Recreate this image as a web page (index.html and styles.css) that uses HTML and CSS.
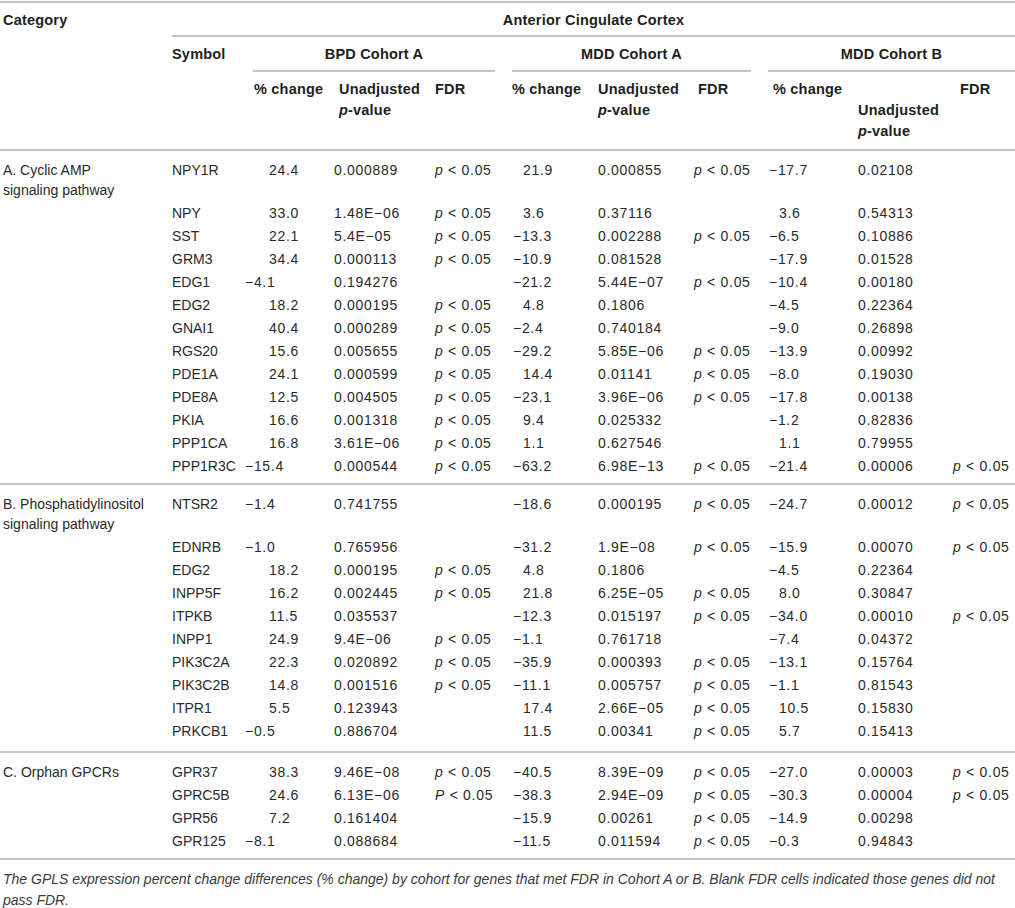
FILE: index.html
```html
<!DOCTYPE html>
<html lang="en">
<head>
  <meta charset="UTF-8">
  <meta name="viewport" content="width=device-width, initial-scale=1.0">
  <title>GPCR expression - Anterior Cingulate Cortex</title>
  <link rel="stylesheet" href="styles.css">
</head>
<body>
  <table class="gpcr">
    <colgroup>
      <col style="width:172px"><col style="width:73px">
      <col style="width:89px"><col style="width:101px"><col style="width:77px">
      <col style="width:86px"><col style="width:96px"><col style="width:75px">
      <col style="width:89px"><col style="width:95px"><col style="width:62px">
    </colgroup>
    <thead>
      <tr class="h-region">
        <th class="cat">Category</th>
        <th colspan="10" class="region">Anterior Cingulate Cortex</th>
      </tr>
      <tr class="h-cohort">
        <th></th>
        <th class="sym">Symbol</th>
        <th colspan="3"><div class="cohort bpd">BPD Cohort A</div></th>
        <th colspan="3"><div class="cohort mdd-a">MDD Cohort A</div></th>
        <th colspan="3"><div class="cohort mdd-b">MDD Cohort B</div></th>
      </tr>
      <tr class="h-metric">
        <th></th>
        <th></th>
        <th>% change</th>
        <th>Unadjusted<br><i>p</i>-value</th>
        <th>FDR</th>
        <th>% change</th>
        <th>Unadjusted<br><i>p</i>-value</th>
        <th>FDR</th>
        <th>% change</th>
        <th><br>Unadjusted<br><i>p</i>-value</th>
        <th>FDR</th>
      </tr>
    </thead>

    <tbody class="grp-a">
      <tr class="lead"><td>A. Cyclic AMP<br>signaling pathway</td><td>NPY1R</td><td class="up">24.4</td><td>0.000889</td><td><i>p</i> &lt; 0.05</td><td class="up">21.9</td><td>0.000855</td><td><i>p</i> &lt; 0.05</td><td>−17.7</td><td>0.02108</td><td></td></tr>
      <tr><td></td><td>NPY</td><td class="up">33.0</td><td>1.48E−06</td><td><i>p</i> &lt; 0.05</td><td class="up">3.6</td><td>0.37116</td><td></td><td class="up">3.6</td><td>0.54313</td><td></td></tr>
      <tr><td></td><td>SST</td><td class="up">22.1</td><td>5.4E−05</td><td><i>p</i> &lt; 0.05</td><td>−13.3</td><td>0.002288</td><td><i>p</i> &lt; 0.05</td><td>−6.5</td><td>0.10886</td><td></td></tr>
      <tr><td></td><td>GRM3</td><td class="up">34.4</td><td>0.000113</td><td><i>p</i> &lt; 0.05</td><td>−10.9</td><td>0.081528</td><td></td><td>−17.9</td><td>0.01528</td><td></td></tr>
      <tr><td></td><td>EDG1</td><td>−4.1</td><td>0.194276</td><td></td><td>−21.2</td><td>5.44E−07</td><td><i>p</i> &lt; 0.05</td><td>−10.4</td><td>0.00180</td><td></td></tr>
      <tr><td></td><td>EDG2</td><td class="up">18.2</td><td>0.000195</td><td><i>p</i> &lt; 0.05</td><td class="up">4.8</td><td>0.1806</td><td></td><td>−4.5</td><td>0.22364</td><td></td></tr>
      <tr><td></td><td>GNAI1</td><td class="up">40.4</td><td>0.000289</td><td><i>p</i> &lt; 0.05</td><td>−2.4</td><td>0.740184</td><td></td><td>−9.0</td><td>0.26898</td><td></td></tr>
      <tr><td></td><td>RGS20</td><td class="up">15.6</td><td>0.005655</td><td><i>p</i> &lt; 0.05</td><td>−29.2</td><td>5.85E−06</td><td><i>p</i> &lt; 0.05</td><td>−13.9</td><td>0.00992</td><td></td></tr>
      <tr><td></td><td>PDE1A</td><td class="up">24.1</td><td>0.000599</td><td><i>p</i> &lt; 0.05</td><td class="up">14.4</td><td>0.01141</td><td><i>p</i> &lt; 0.05</td><td>−8.0</td><td>0.19030</td><td></td></tr>
      <tr><td></td><td>PDE8A</td><td class="up">12.5</td><td>0.004505</td><td><i>p</i> &lt; 0.05</td><td>−23.1</td><td>3.96E−06</td><td><i>p</i> &lt; 0.05</td><td>−17.8</td><td>0.00138</td><td></td></tr>
      <tr><td></td><td>PKIA</td><td class="up">16.6</td><td>0.001318</td><td><i>p</i> &lt; 0.05</td><td class="up">9.4</td><td>0.025332</td><td></td><td>−1.2</td><td>0.82836</td><td></td></tr>
      <tr><td></td><td>PPP1CA</td><td class="up">16.8</td><td>3.61E−06</td><td><i>p</i> &lt; 0.05</td><td class="up">1.1</td><td>0.627546</td><td></td><td class="up">1.1</td><td>0.79955</td><td></td></tr>
      <tr class="tail"><td></td><td>PPP1R3C</td><td>−15.4</td><td>0.000544</td><td><i>p</i> &lt; 0.05</td><td>−63.2</td><td>6.98E−13</td><td><i>p</i> &lt; 0.05</td><td>−21.4</td><td>0.00006</td><td><i>p</i> &lt; 0.05</td></tr>
    </tbody>

    <tbody class="grp-b">
      <tr class="lead"><td>B. Phosphatidylinositol<br>signaling pathway</td><td>NTSR2</td><td>−1.4</td><td>0.741755</td><td></td><td>−18.6</td><td>0.000195</td><td><i>p</i> &lt; 0.05</td><td>−24.7</td><td>0.00012</td><td><i>p</i> &lt; 0.05</td></tr>
      <tr><td></td><td>EDNRB</td><td>−1.0</td><td>0.765956</td><td></td><td>−31.2</td><td>1.9E−08</td><td><i>p</i> &lt; 0.05</td><td>−15.9</td><td>0.00070</td><td><i>p</i> &lt; 0.05</td></tr>
      <tr><td></td><td>EDG2</td><td class="up">18.2</td><td>0.000195</td><td><i>p</i> &lt; 0.05</td><td class="up">4.8</td><td>0.1806</td><td></td><td>−4.5</td><td>0.22364</td><td></td></tr>
      <tr><td></td><td>INPP5F</td><td class="up">16.2</td><td>0.002445</td><td><i>p</i> &lt; 0.05</td><td class="up">21.8</td><td>6.25E−05</td><td><i>p</i> &lt; 0.05</td><td class="up">8.0</td><td>0.30847</td><td></td></tr>
      <tr><td></td><td>ITPKB</td><td class="up">11.5</td><td>0.035537</td><td></td><td>−12.3</td><td>0.015197</td><td><i>p</i> &lt; 0.05</td><td>−34.0</td><td>0.00010</td><td><i>p</i> &lt; 0.05</td></tr>
      <tr><td></td><td>INPP1</td><td class="up">24.9</td><td>9.4E−06</td><td><i>p</i> &lt; 0.05</td><td>−1.1</td><td>0.761718</td><td></td><td>−7.4</td><td>0.04372</td><td></td></tr>
      <tr><td></td><td>PIK3C2A</td><td class="up">22.3</td><td>0.020892</td><td><i>p</i> &lt; 0.05</td><td>−35.9</td><td>0.000393</td><td><i>p</i> &lt; 0.05</td><td>−13.1</td><td>0.15764</td><td></td></tr>
      <tr><td></td><td>PIK3C2B</td><td class="up">14.8</td><td>0.001516</td><td><i>p</i> &lt; 0.05</td><td>−11.1</td><td>0.005757</td><td><i>p</i> &lt; 0.05</td><td>−1.1</td><td>0.81543</td><td></td></tr>
      <tr><td></td><td>ITPR1</td><td class="up">5.5</td><td>0.123943</td><td></td><td class="up">17.4</td><td>2.66E−05</td><td><i>p</i> &lt; 0.05</td><td class="up">10.5</td><td>0.15830</td><td></td></tr>
      <tr class="tail"><td></td><td>PRKCB1</td><td>−0.5</td><td>0.886704</td><td></td><td class="up">11.5</td><td>0.00341</td><td><i>p</i> &lt; 0.05</td><td class="up">5.7</td><td>0.15413</td><td></td></tr>
    </tbody>

    <tbody class="grp-c">
      <tr class="lead"><td>C. Orphan GPCRs</td><td>GPR37</td><td class="up">38.3</td><td>9.46E−08</td><td><i>p</i> &lt; 0.05</td><td>−40.5</td><td>8.39E−09</td><td><i>p</i> &lt; 0.05</td><td>−27.0</td><td>0.00003</td><td><i>p</i> &lt; 0.05</td></tr>
      <tr><td></td><td>GPRC5B</td><td class="up">24.6</td><td>6.13E−06</td><td><i>P</i> &lt; 0.05</td><td>−38.3</td><td>2.94E−09</td><td><i>p</i> &lt; 0.05</td><td>−30.3</td><td>0.00004</td><td><i>p</i> &lt; 0.05</td></tr>
      <tr><td></td><td>GPR56</td><td class="up">7.2</td><td>0.161404</td><td></td><td>−15.9</td><td>0.00261</td><td><i>p</i> &lt; 0.05</td><td>−14.9</td><td>0.00298</td><td></td></tr>
      <tr class="tail"><td></td><td>GPR125</td><td>−8.1</td><td>0.088684</td><td></td><td>−11.5</td><td>0.011594</td><td><i>p</i> &lt; 0.05</td><td>−0.3</td><td>0.94843</td><td></td></tr>
    </tbody>
  </table>

  <p class="note">The GPLS expression percent change differences (% change) by cohort for genes that met FDR in Cohort A or B. Blank FDR cells indicated those genes did not pass FDR.</p>
</body>
</html>
```

FILE: styles.css
```css
body {
  font-family: "Liberation Sans", Arial, sans-serif;
  margin: 0;
  padding-top: 1px;
  background: #fff;
  color: #2a2a2a;
}

.gpcr {
  width: 1015px;
  table-layout: fixed;
  border-collapse: separate;
  border-spacing: 0;
  font-size: 14px;
}

.gpcr th,
.gpcr td {
  padding: 0;
  text-align: left;
  vertical-align: top;
  white-space: nowrap;
}

/* header */
.gpcr th {
  font-size: 14.5px;
  font-weight: bold;
  letter-spacing: 0.2px;
  color: #1e1e1e;
}

.h-region th {
  border-top: 2px solid #c4c4c4;
  padding: 7px 0 5px;
  line-height: 20px;
}
.h-region .cat { padding-left: 3px; }
.h-region .region {
  text-align: center;
  border-bottom: 2px solid #c4c4c4;
}

.h-cohort th {
  padding: 7px 0 8px;
  line-height: 20px;
}
.h-cohort th[colspan] { padding-bottom: 0; }

.cohort {
  text-align: center;
  padding-bottom: 6px;
  border-bottom: 2px solid #c4c4c4;
}
.cohort.bpd { margin: 0 17px 0 8px; }
.cohort.mdd-a { margin: 0 18px 0 0; }
.cohort.mdd-b { margin: 0 0 0 -1px; }

.h-metric th {
  padding: 6.5px 0 7.5px;
  line-height: 21px;
  border-bottom: 2px solid #c4c4c4;
}
.h-metric th:nth-child(3) { padding-left: 9px; }
.h-metric th:nth-child(4) { padding-left: 5px; }
.h-metric th:nth-child(8) { padding-left: 4px; }
.h-metric th:nth-child(9) { padding-left: 4px; }
.h-metric th:nth-child(11) { padding-left: 7px; }

/* body rows */
.gpcr td {
  padding-top: 1.5px;
  padding-bottom: 1.5px;
  line-height: 20px;
  letter-spacing: 0.7px;
}
.gpcr td:nth-child(1),
.gpcr td:nth-child(2) { letter-spacing: 0; }
.gpcr td:nth-child(1) { padding-left: 3px; }

.gpcr td:nth-child(3).up { padding-left: 24px; }
.gpcr td:nth-child(6) { padding-left: 1px; }
.gpcr td:nth-child(6).up { padding-left: 11px; }
.gpcr td:nth-child(9).up { padding-left: 10px; }

.gpcr tr.lead td { padding-top: 9px; }
.gpcr tr.tail td { border-bottom: 2px solid #c4c4c4; }
.grp-a tr.tail td { padding-bottom: 6.5px; }
.grp-b tr.tail td { padding-bottom: 10.5px; }
.grp-c tr.tail td { padding-bottom: 6.5px; }

.note {
  margin: 9px 0 0;
  padding: 0 3px;
  font-size: 14px;
  line-height: 21px;
  font-style: italic;
  color: #3a3a3a;
}
```
